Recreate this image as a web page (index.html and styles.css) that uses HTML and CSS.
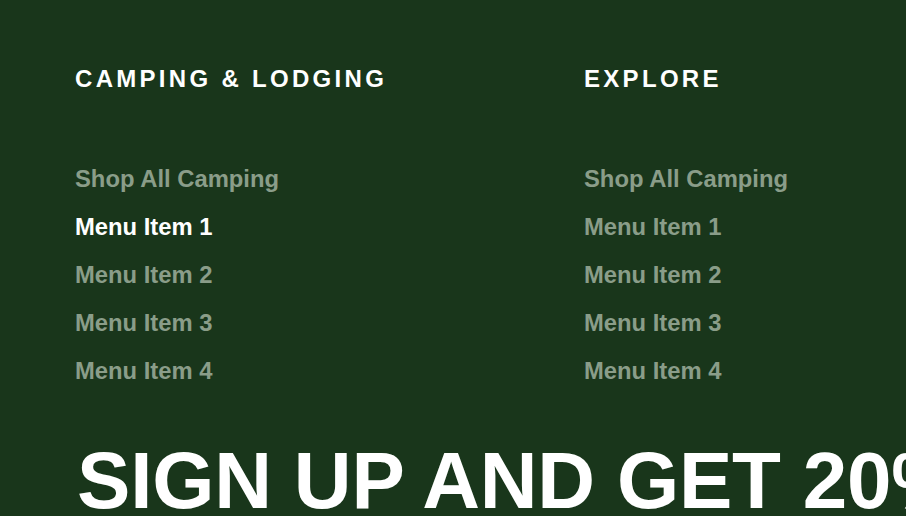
FILE: index.html
```html
<!DOCTYPE html>
<html lang="en">
<head>
<meta charset="utf-8">
<title>Footer</title>
<link rel="stylesheet" href="styles.css">
</head>
<body>
<footer class="footer">
  <div class="columns">
    <section class="col">
      <h3 class="col-title">CAMPING &amp; LODGING</h3>
      <ul class="menu">
        <li><a class="menu-link" href="#">Shop All Camping</a></li>
        <li><a class="menu-link active" href="#">Menu Item 1</a></li>
        <li><a class="menu-link" href="#">Menu Item 2</a></li>
        <li><a class="menu-link" href="#">Menu Item 3</a></li>
        <li><a class="menu-link" href="#">Menu Item 4</a></li>
      </ul>
    </section>
    <section class="col">
      <h3 class="col-title">EXPLORE</h3>
      <ul class="menu">
        <li><a class="menu-link" href="#">Shop All Camping</a></li>
        <li><a class="menu-link" href="#">Menu Item 1</a></li>
        <li><a class="menu-link" href="#">Menu Item 2</a></li>
        <li><a class="menu-link" href="#">Menu Item 3</a></li>
        <li><a class="menu-link" href="#">Menu Item 4</a></li>
      </ul>
    </section>
  </div>
  <h2 class="signup">SIGN UP AND GET 20% OFF</h2>
</footer>
</body>
</html>
```
FILE: styles.css
```css
html, body {
  margin: 0;
  padding: 0;
  background: #19361b;
  overflow: hidden;
}
body {
  font-family: "Liberation Sans", Arial, Helvetica, sans-serif;
  color: #ffffff;
}
.footer {
  padding: 67px 0 0 75px;
  white-space: nowrap;
}
.columns {
  display: grid;
  grid-template-columns: 509px 509px;
}
.col-title {
  margin: 0;
  font-size: 24px;
  line-height: 24px;
  font-weight: 700;
  letter-spacing: 3.3px;
  color: #ffffff;
}
.menu {
  list-style: none;
  margin: 64px 0 0 0;
  padding: 0;
}
.menu li {
  line-height: 48px;
  height: 48px;
}
.menu-link {
  font-size: 23.8px;
  font-weight: 700;
  color: #8a9d89;
  text-decoration: none;
}
.menu-link.active {
  color: #ffffff;
}
.signup {
  margin: 46px 0 0 2px;
  font-size: 80px;
  line-height: 80px;
  font-weight: 700;
  color: #ffffff;
  letter-spacing: -0.2px;
}
```
